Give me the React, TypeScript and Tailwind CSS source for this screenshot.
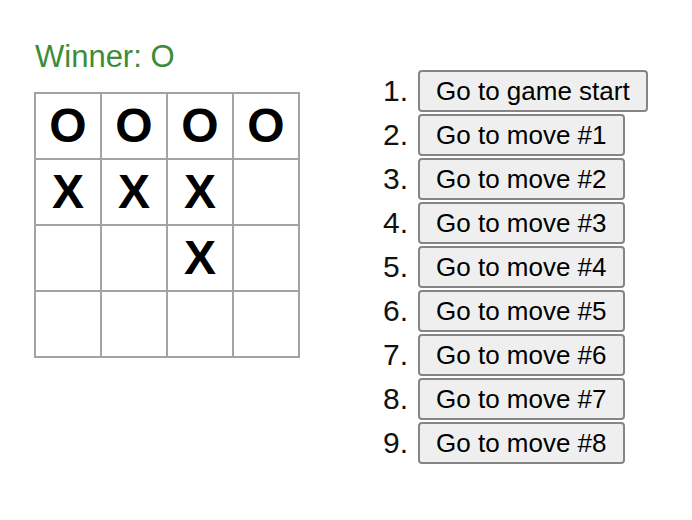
import React from 'react'

const squares: (string | null)[] = [
  'O', 'O', 'O', 'O',
  'X', 'X', 'X', null,
  null, null, 'X', null,
  null, null, null, null,
]

const moves = [
  'Go to game start',
  'Go to move #1',
  'Go to move #2',
  'Go to move #3',
  'Go to move #4',
  'Go to move #5',
  'Go to move #6',
  'Go to move #7',
  'Go to move #8',
]

function Square({ value }: { value: string | null }) {
  return (
    <div className="w-[64px] h-[64px] bg-white flex items-center justify-center text-[48px] font-bold leading-none text-black">
      {value}
    </div>
  )
}

export default function App() {
  return (
    <div
      className="w-[692px] h-[520px] bg-white flex pt-[37px] pl-[34px]"
      style={{ fontFamily: '"Liberation Sans", Arial, sans-serif' }}
    >
      <div className="flex flex-col">
        <div className="text-[31px] leading-[34px] h-[34px] text-[#3d8c37] mt-[3px] mb-[18px] ml-[1px]">Winner: O</div>
        <div className="grid grid-cols-4 gap-[2px] p-[2px] bg-[#a3a3a3] w-max">
          {squares.map((v, i) => (
            <Square key={i} value={v} />
          ))}
        </div>
      </div>

      <ol className="ml-[70px] mt-[33px] flex flex-col gap-[2px]">
        {moves.map((m, i) => (
          <li key={i} className="flex items-center">
            <span className="w-[38px] text-right text-[30px] leading-none text-[#111] mr-[10px]">{i + 1}.</span>
            <button className="h-[42px] px-[16px] bg-[#efefef] border-2 border-[#858585] rounded-[4px] text-[26px] leading-[26px] text-black flex items-center">
              {m}
            </button>
          </li>
        ))}
      </ol>
    </div>
  )
}
